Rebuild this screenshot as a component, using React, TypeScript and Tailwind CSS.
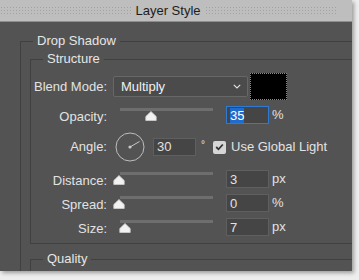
import React from 'react';

const font = { fontFamily: '"Liberation Sans", Arial, sans-serif' };

const Thumb: React.FC = () => (
    <svg width="12" height="10" viewBox="0 0 12 10" className="block">
        <path d="M6 0.5 L11.2 5.5 L11.2 9.5 L0.8 9.5 L0.8 5.5 Z" fill="#f2f2f2" stroke="#cfcfcf" strokeWidth="0.8" strokeLinejoin="round" />
    </svg>
);

interface SliderRowProps {
    label: string;
    value: string;
    unit: string;
    pos: number;
    selected?: boolean;
}

const SliderRow: React.FC<SliderRowProps> = ({ label, value, unit, pos, selected }) => (
    <div className="flex h-[18px] items-center">
        <div className="w-[76px] text-right pt-[4px]">{label}</div>
        <div className="relative ml-[13px] h-full w-[93px]">
            <div className="absolute left-0 right-0 top-[2px] h-[3px] bg-[#6e6e6e]" />
            <div className="absolute top-[5px]" style={{ left: pos }}>
                <Thumb />
            </div>
        </div>
        <div
            className={`ml-[13px] flex h-[18px] w-[43px] items-center border px-[3px] ${
                selected ? 'border-[#2f7ad3] bg-[#454545]' : 'border-[#5f5f5f] bg-[#454545]'
            }`}
        >
            <span className={selected ? 'bg-[#1f6ccf] text-white leading-[15px]' : 'leading-[15px]'}>{value}</span>
        </div>
        <span className="ml-[3px]">{unit}</span>
    </div>
);

export default function App() {
    return (
        <div className="h-[280px] w-[359px] overflow-hidden bg-[#eeeeee] text-[13px] text-[#e2e2e2]" style={font}>
            <div className="h-[271px] w-[352px] overflow-hidden bg-[#535353] shadow-[2px_2px_4px_rgba(0,0,0,0.35)]">
                <div className="flex h-[22px] items-center border-b border-[#8d8d8d] bg-[#bebebe] pr-[16px]">
                    <div className="h-[10px] flex-1 bg-[radial-gradient(#a2a2a2_0.7px,transparent_0.9px)] bg-[length:3px_3px]" />
                    <span className="px-[4px] text-[13px] leading-[16px] text-[#1c1c1c]">Layer Style</span>
                    <div className="h-[10px] flex-1 bg-[radial-gradient(#a2a2a2_0.7px,transparent_0.9px)] bg-[length:3px_3px]" />
                </div>

                <fieldset className="ml-[20px] mt-[11px] w-[360px] border border-[#404040] pb-[20px]">
                    <legend className="ml-[12px] px-[4px] leading-[16px] text-[#e6e6e6]">Drop Shadow</legend>

                    <fieldset className="ml-[9px] mt-[2px] w-[360px] border border-[#404040] pb-[7px] pt-[6px]">
                        <legend className="ml-[12px] px-[4px] leading-[16px] text-[#e6e6e6]">Structure</legend>

                        <div className="flex h-[27px] items-center">
                            <div className="w-[76px] text-right">Blend Mode:</div>
                            <div className="ml-[6px] flex h-[21px] w-[135px] items-center justify-between rounded-[2px] border border-[#676767] bg-[#4b4b4b] pl-[7px] pr-[6px]">
                                <span className="text-[#f0f0f0]">Multiply</span>
                                <svg width="8" height="5" viewBox="0 0 8 5">
                                    <path d="M0.8 0.8 L4 4 L7.2 0.8" fill="none" stroke="#e6e6e6" strokeWidth="1.1" />
                                </svg>
                            </div>
                            <div className="ml-[2px] h-[27px] w-[37px] border border-dotted border-[#8a8a8a] bg-black" />
                        </div>

                        <div className="mt-[6px]">
                            <SliderRow label="Opacity:" value="35" unit="%" pos={25} selected />
                        </div>

                        <div className="mt-[9px] flex h-[28px] items-center">
                            <div className="w-[76px] text-right">Angle:</div>
                            <svg width="30" height="30" viewBox="0 0 30 30" className="ml-[8px]">
                                <circle cx="15" cy="15" r="14" fill="none" stroke="#bdbdbd" strokeWidth="1" />
                                <circle cx="15" cy="15" r="1.6" fill="#c8c8c8" />
                                <line x1="15" y1="15" x2="24.5" y2="9.5" stroke="#c8c8c8" strokeWidth="1" />
                            </svg>
                            <div className="ml-[8px] flex h-[18px] w-[43px] items-center border border-[#5f5f5f] bg-[#454545] px-[3px]">
                                30
                            </div>
                            <span className="ml-[5px] -mt-[6px] text-[10px]">°</span>
                            <div className="ml-[8px] flex h-[13px] w-[13px] items-center justify-center rounded-[2px] bg-[#d6d6d6]">
                                <svg width="9" height="8" viewBox="0 0 9 8">
                                    <path d="M1.2 4 L3.5 6.3 L7.8 1.5" fill="none" stroke="#333" strokeWidth="1.8" />
                                </svg>
                            </div>
                            <span className="ml-[5px]">Use Global Light</span>
                        </div>

                        <div className="mt-[9px] flex flex-col gap-[6px]">
                            <SliderRow label="Distance:" value="3" unit="px" pos={-7} />
                            <SliderRow label="Spread:" value="0" unit="%" pos={-7} />
                            <SliderRow label="Size:" value="7" unit="px" pos={-1} />
                        </div>
                    </fieldset>

                    <fieldset className="ml-[9px] mt-[7px] h-[40px] w-[360px] border border-[#404040]">
                        <legend className="ml-[12px] px-[4px] leading-[16px] text-[#e6e6e6]">Quality</legend>
                    </fieldset>
                </fieldset>
            </div>
        </div>
    );
}
